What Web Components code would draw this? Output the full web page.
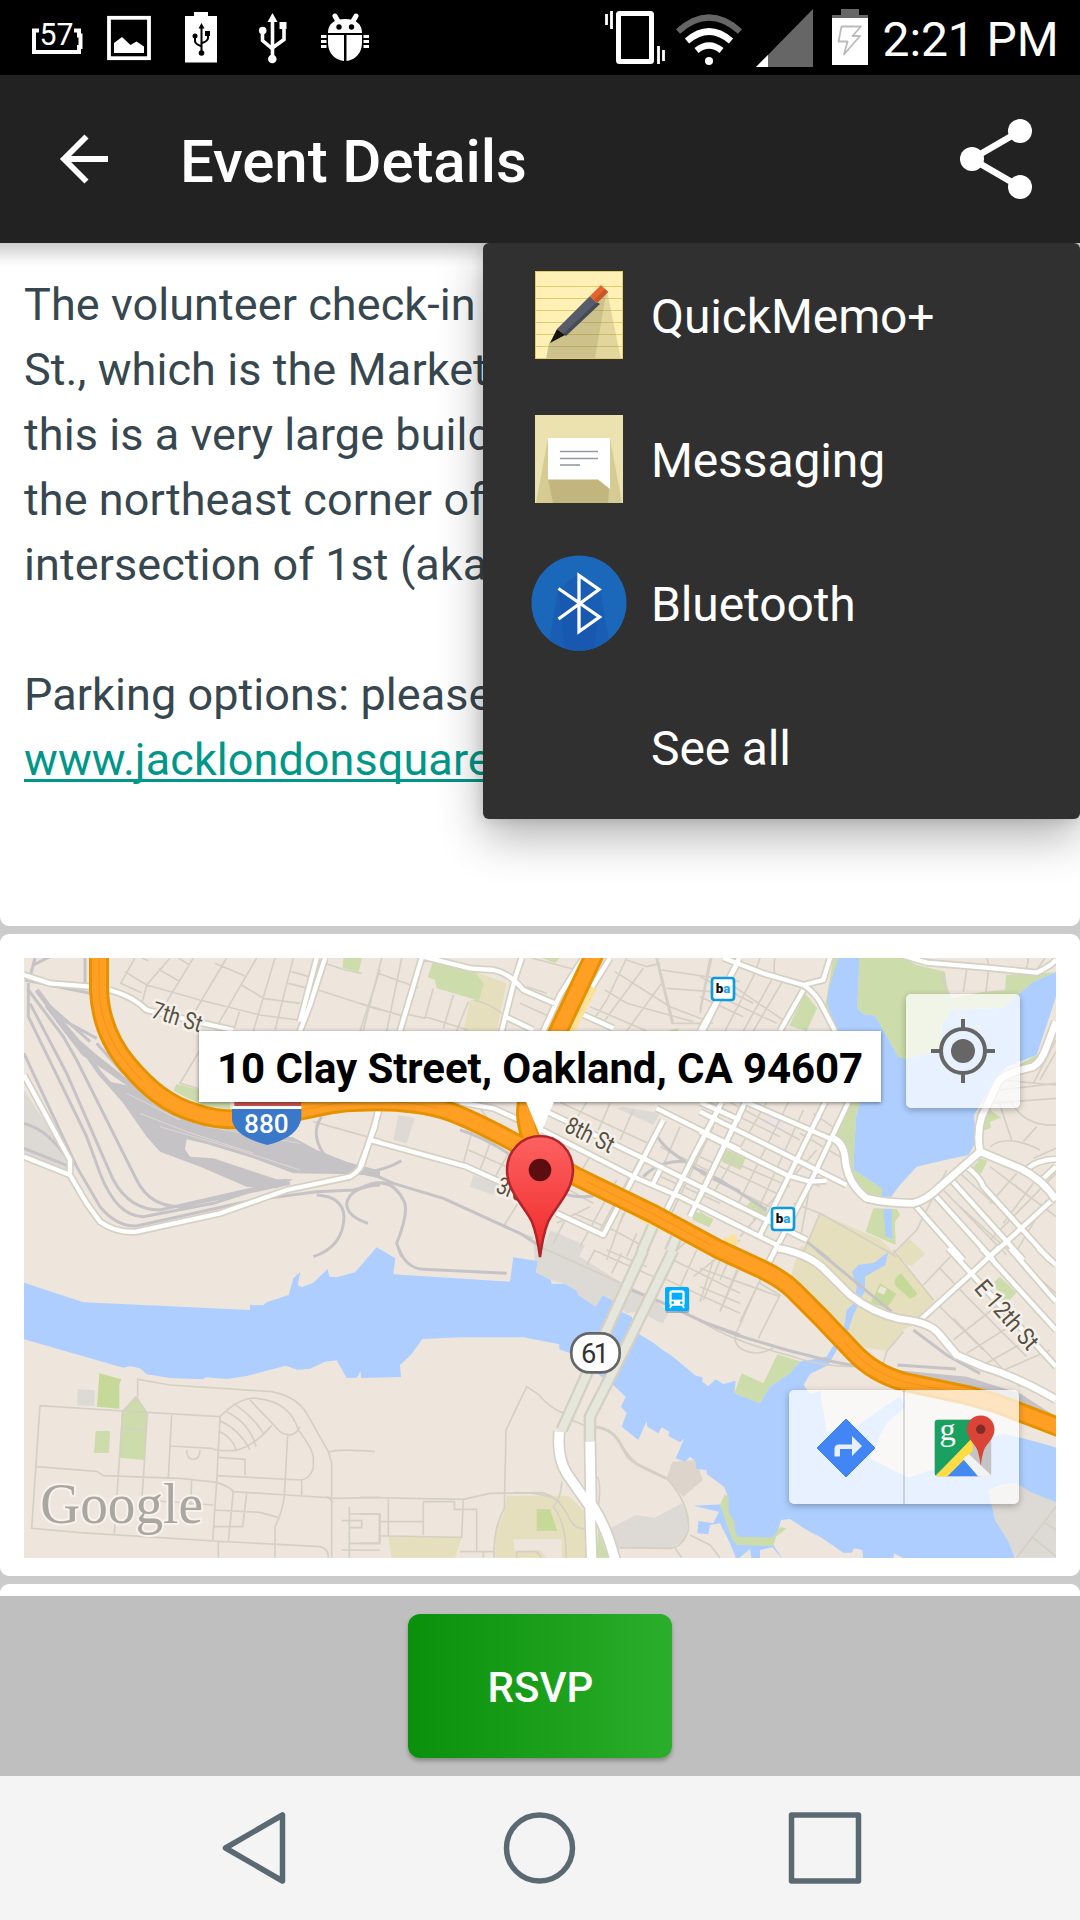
<!DOCTYPE html>
<html lang="en">
<head>
<meta charset="utf-8">
<title>Event Details</title>
<style>
html,body{margin:0;padding:0;width:1080px;height:1920px;overflow:hidden;background:#fff;font-family:Roboto,"Noto Sans",sans-serif}
</style>
</head>
<body>
<phone-screen>
  <status-bar slot="status">2:21 PM</status-bar>
  <app-bar slot="bar">Event Details</app-bar>
  <share-menu slot="menu">
    <menu-row icon="memo">QuickMemo+</menu-row>
    <menu-row icon="message">Messaging</menu-row>
    <menu-row icon="bluetooth">Bluetooth</menu-row>
    <menu-row>See all</menu-row>
  </share-menu>
  <info-card class="desc" kind="text"><event-text></event-text></info-card>
  <info-card kind="map"><map-view address="10 Clay Street, Oakland, CA 94607"></map-view></info-card>
  <info-card kind="rest"></info-card>
  <rsvp-bar slot="action">RSVP</rsvp-bar>
  <nav-bar slot="nav"></nav-bar>
</phone-screen>
<script>
const define = (name, html) => customElements.define(name, class extends HTMLElement {
  constructor(){
    super();
    this.attachShadow({mode:'open'});
  }
  connectedCallback(){
    this.shadowRoot.innerHTML = typeof html === 'function' ? html(this) : html;
  }
});

define('phone-screen', `
<style>
:host{display:flex;flex-direction:column;width:1080px;height:1920px;position:relative;overflow:hidden}
main{flex:1;display:flex;flex-direction:column;gap:8px;background:#ccc;overflow:hidden;position:relative;min-height:0}
.shade{position:absolute;left:0;right:0;top:0;height:24px;background:linear-gradient(rgba(0,0,0,.2),rgba(0,0,0,.1) 42%,rgba(0,0,0,.03) 75%,transparent)}
</style>
<slot name="status"></slot><slot name="bar"></slot>
<main><slot></slot><div class="shade"></div></main>
<slot name="action"></slot><slot name="nav"></slot><slot name="menu"></slot>`);

define('status-bar', `
<style>
:host{display:flex;height:75px;background:#000;color:#fff;font-size:48px;line-height:75px;flex:none}
svg{display:block;flex:none;height:75px}
.sp{flex:1}
.time{width:206px;box-sizing:border-box;padding-left:8.500px;margin-top:2px;height:73px;white-space:nowrap;letter-spacing:-.1px}
</style>
<svg width="90" viewBox="0 0 90 75"><path d="M39 30.500h-5v21.500h45V47h1.500V35.500H79v-5h-5" fill="none" stroke="#fff" stroke-width="4"/><text x="39.500" y="45" font-size="31" textLength="34" lengthAdjust="spacingAndGlyphs" fill="#fff">57</text></svg>
<svg width="75" viewBox="90 0 75 75"><rect x="109" y="17.800" width="40" height="40.400" fill="none" stroke="#fff" stroke-width="3.800"/><path d="M114 53V43l8-6 8.500 8 6-3.500 7.500 5V53z" fill="#fff"/></svg>
<svg width="70" viewBox="165 0 70 75"><path d="M185 16h9v-4h14v4h9v46.500h-32z" fill="#fff"/><g fill="none" stroke="#000" stroke-width="2"><path d="M201.500 26v26M195 37v4q0 3 6 5M208 34v4q0 3-6 5"/></g><g><circle cx="201.500" cy="53" r="2.800"/><circle cx="195" cy="36" r="2.500"/><path d="M198.500 28.500l3-5.500 3 5.500zM205 31h5v5h-5z"/></g></svg>
<svg width="70" viewBox="235 0 70 75"><g fill="none" stroke="#fff" stroke-width="3.600"><path d="M272.500 20v40M262.500 31v9.500l10 8.500v4M284 26v13.500l-11 8"/></g><g fill="#fff"><circle cx="272.300" cy="59" r="4.300"/><circle cx="262.700" cy="30.500" r="3.800"/><path d="M267.500 22l5-9 5 9zM279.500 22h7v7h-7z"/></g></svg>
<svg width="90" viewBox="305 0 90 75"><g fill="#fff"><path d="M328 33c0-9 6-14 17-14s17 5 17 14zM328 35h16v26c-10-1-16-9-16-18zM346.500 35H362v8c0 9-6 17-15.500 18zM321 35h5.500v3H321zm0 5h5.500v3H321zm0 5h5.500v3H321zm42.500-10h5.500v3h-5.500zm0 5h5.500v3h-5.500zm0 5h5.500v3h-5.500z"/></g><path d="M335 16l4 7M356 16l-4 7" stroke="#fff" stroke-width="5" stroke-linecap="round"/><circle cx="339" cy="27" r="2.700"/><circle cx="351.500" cy="27" r="2.700"/></svg>
<div class="sp"></div>
<svg width="70" viewBox="600 0 70 75"><rect x="618.500" y="13.500" width="33" height="48" rx="1" fill="none" stroke="#fff" stroke-width="5"/><path d="M606.500 14v11M611.500 11v18M658.500 46v18M663.500 50v11" stroke="#fff" stroke-width="2.800"/></svg>
<svg width="80" viewBox="670 0 80 75"><g fill="none" stroke-width="6"><path d="M678 31.500q31-28 62 0" stroke="#666"/><path d="M687 41q22-19 44 0M696.500 50.500q12.500-10 25 0" stroke="#fff" stroke-width="6.500"/></g><circle cx="709" cy="61" r="4" fill="#fff"/></svg>
<svg width="75" viewBox="750 0 75 75"><path d="M813 9v58h-57z" fill="#666"/><path d="M768 55v12h-12z" fill="#fff"/></svg>
<svg width="49" viewBox="825 0 49 75"><path d="M841 9h18v6h9v3h-36v-3h9z" fill="#666"/><path d="M832 18h36v47h-36z" fill="#fff"/><path d="M841.500 26.500H861l-8.500 9.500h7.500l-16 18.500 3.500-13h-9z" fill="none" stroke="#bbb" stroke-width="1.800" stroke-linejoin="round"/></svg>
<span class="time"><slot></slot></span>`);

define('app-bar', `
<style>
:host{display:flex;align-items:center;height:168px;flex:none;background:#222;color:#fff;position:relative}
svg{display:block;flex:none}
h1{margin:5px 0 0 0;flex:1;font:500 60px/70px Roboto;white-space:nowrap;letter-spacing:-.1px}
</style>
<svg width="180" height="168" viewBox="0 75 180 168"><path d="M108 159H64M86.500 136.500L64 159l22.500 22.500" fill="none" stroke="#fff" stroke-width="5.800"/></svg>
<h1><slot></slot></h1>
<svg width="150" height="168" viewBox="930 75 150 168"><path d="M1020 131l-48 28 48 28" fill="none" stroke="#fff" stroke-width="6.500"/><g fill="#fff"><circle cx="1020" cy="131" r="12"/><circle cx="972" cy="159" r="12"/><circle cx="1020" cy="187" r="12"/></g></svg>`);

define('share-menu', `
<style>
:host{display:flex;flex-direction:column;position:absolute;left:483px;top:243px;width:597px;background:#303030;border-radius:6px;box-shadow:0 18px 46px rgba(0,0,0,.3),0 0 14px rgba(0,0,0,.14);clip-path:inset(0 0 -100px -100px)}
</style><slot></slot>`);

const rowIcons = {
  memo:`<svg width="96" height="96" viewBox="0 0 96 96"><rect x="4" y="4" width="88" height="88" fill="#fff1b5"/><path d="M4 19.500h88M4 31.500h88M4 43.500h88M4 55.500h88M4 67.500h88M4 79.500h88" stroke="#dfcc71"/><path d="M18 76L76 23 64 92H15z" fill="#837d50" opacity=".4"/><path d="M76 24L90 92H64z" fill="#968e60" opacity=".28"/><rect x="4.500" y="4.500" width="87" height="87" fill="none" stroke="#e0cd63"/><path d="M59 29l7 7-32 32-8-6z" fill="#565c6a"/><path d="M66 35l3 2-34 32-3-2z" fill="#464a55"/><path d="M59 29l11-11 7 7-11 11z" fill="#e3642f"/><path d="M74 22l3 3-11 11-3-3z" fill="#c95427"/><path d="M26 62l8 6-15 8z" fill="#17130c"/></svg>`,
  message:`<svg width="96" height="96" viewBox="0 0 96 96"><rect x="4" y="4" width="88" height="88" fill="#ece2af"/><path d="M17 27L5 92h86L79 27z" fill="#d7cb94"/><path d="M17 68l5 24h55l2-24z" fill="#c3b57e"/><path d="M17 27h62v51l-12-9.500H17z" fill="#fff"/><path d="M29 40.500h38M29 47.500h38" stroke="#969ca1" stroke-width="1.300"/><path d="M29 54h20" stroke="#aaafb3" stroke-width="2"/></svg>`,
  bluetooth:`<svg width="96" height="96" viewBox="0 0 96 96"><clipPath id="c"><circle cx="48" cy="48" r="47.500"/></clipPath><g clip-path="url(#c)"><path d="M0 0h96v96H0z" fill="#1b67ba"/><path d="M48 19L27 34 17 96h63L69 34z" fill="#195eb4"/><path d="M28 34L34 96h28l6-35z" fill="#1858b0"/></g><path d="M27.500 33.500l41 28.500L48 76.500V20.500L68 34.500 27.500 64" fill="none" stroke="#fff" stroke-width="3.300"/></svg>`
};
define('menu-row', el => `
<style>
:host{display:flex;align-items:center;height:144px;box-sizing:border-box;padding-left:48px;color:#fff;font-size:48px;line-height:60px;letter-spacing:-.12px}
.i{width:96px;height:96px;margin-right:24px}
svg{display:block}
span{padding-top:4px}
</style><div class="i">${rowIcons[el.getAttribute('icon')]||''}</div><span><slot></slot></span>`);

define('info-card', `
<style>
:host{display:block;box-sizing:border-box;background:#fff;border-radius:0 0 9px 9px;flex:none;width:1080px;box-shadow:0 5px 0 #cbcbcb}
:host([kind=text]){height:683px;padding:29px 24px 0}
:host([kind=map]){height:642px;padding:24px 24px 18px;border-radius:9px}
:host([kind=rest]){height:40px;border-radius:9px 9px 0 0}
</style><slot></slot>`);

define('event-text', `
<style>
:host{display:block;font-size:45px;line-height:65px;color:#37474f;white-space:nowrap;letter-spacing:.07px}
p{margin:0 0 65px}p+p{margin:0}
a{color:#009688;text-decoration:underline;text-decoration-thickness:2.500px;text-underline-offset:4px;text-decoration-skip-ink:none}
</style>
<p>The volunteer check-in<br>St., which is the Market<br>this is a very large build<br>the northeast corner of<br>intersection of 1st (aka</p>
<p>Parking options: please<br><a>www.jacklondonsquare</a></p>`);

/* The map canvas uses 3 units per pixel; shapes are grouped in six tiles. */
const origin = {a:[0,0],b:[1080,0],c:[2100,0],d:[0,930],e:[1080,930],f:[2100,930]};
const layer = (attrs, tiles) => Object.entries(tiles).map(([k,d]) =>
  `<path transform="translate(${origin[k]})" d="${d}" ${attrs}/>`).join('');
const road = (tiles, w, casing, fill='#fff', edge='#d5d0c4') =>
  layer(`fill="none" stroke="${edge}" stroke-width="${w+casing}" stroke-linejoin="round"`, tiles) +
  layer(`fill="none" stroke="${fill}" stroke-width="${w}" stroke-linejoin="round"`, tiles);

const green = layer('fill="#cddcab"', {
  a:'M1030 54h56l-10 42-48-12zM530 432l80 20 80 30v25l-80-10-90-45z',
  b:'M220 62L345 95 372 130 358 182 230 145 225 120 203 112zM545 54h55l-15 15zM1095 630l50 20v35l-60-25zM1010 815l50 22-12 25-50-22zM930 270l25-5v20h-25z',
  c:'M478 54H610L650 75 735 95 740 135 755 175 850 155 915 150 918 105 1068 97 1000 125 960 160 910 203 755 210 725 260 725 330 615 358 595 350 525 227 490 223 472 205zM400 54h20L387 150 384 190 412 275 375 200zM315 160l36 45-31 68-52-16zM480 487L468 530 460 688 545 745 577 768 490 775 440 700 440 640 405 590 450 490zM520 805l70 2 10 18-15 20 2 70-90-40zM80 630l57 25-15 35-57-25zM160 775l40 30v25l-62-30zM840 655l23 7-20 40-25-17zM870 510l33 23-33 12 3 18-25 10-15-50zM945 380l65-35 20 5-20 25-60 20zM0 815l40 25-15 20-25-15z',
  d:'M408 440l32 48-7 142-75-7 7-140zM287 543h43l-3 66h-45z',
  e:'M715 840l30 83h-35z',
  f:'M125 370L190 400 232 313 305 335 270 370 210 410 180 460 103 430zM900 80l50 48-35 35-35-65z'
});
const park2 = layer('fill="#c5da98"', {d:'M298 370l66 18-6 16v72l-67-6z', e:'M530 778h40l22 64h-62z', f:'M603 70l50 62-22 15-45-40q-10-20 17-37zM540 100l50 32-30 42-48-15z'});
const sand = layer('fill="#e6dfbe"', {
  b:'M345 95L440 130 410 273H310L330 180 358 182 372 130z',
  c:'M360 820L545 900 590 950 600 1000 300 950zM625 897l50 45-40 36-40-28z',
  e:'M440 737H625L690 800V923H405L407 840 430 790zM85 858l220 4-20 61H95z',
  f:'M300-10L540-30 590 15 705 150 655 215 610 240 560 303 450 285 270 85zM590 5l35-40 50 45-50 38z'
});
const grey = layer('fill="#dddad5"', {
  a:'M72 450L210 660V705L72 650z',
  b:'M115 525l50 10-25 75-40-10zM790 500l110 20-20 35-110-50zM340 705l80 30-20 30-70-25zM570 870l105 45-20 40-100-40z',
  d:'M233 417l52 4-2 48-52-3z',
  e:'M520-30L660 20 780 95 890 150 925 190 908 222 838 185 800 190 755 150 728 136 707 170 655 136 650 122 615 101 572 90 527 67z',
  f:'M865 720L950 700 1068 757V923H948L885 810z'
}) + layer('fill="#ebe3e6"',{c:'M203 522l57 22-14 32-58-24z'}) + layer('fill="#dddad5"',{e:'M720 850L828 795 885 803 965 760 988 800 975 870 930 893 770 897z'}) + layer('fill="#ddd5cc"',{e:'M937 635l71-5 20 60-58 50-50-57z'});

const water = layer('fill="#adceff"', {
  d:`M72 98L250 157 750 180 750 165 790 166 800 157 866 135 880 85 901 66 893 105 905 112 940 98 983 57 988 80 1010 82 1065 67 1130-8 1186 25 1180 73 1530 95 1540 22 1613 33 1607 67 1652 90 1655 101 1695 101 1730 122 1735 136 1787 170 1808 136 1835 150 1865 185 1895 200 1918 253 1960 278 1985 298 2015 317 2088 378 2107 381 2107 395 2125 409 2147 388 2170 402 2207 392 2203 430 2280 460 2310 410 2370 370 2400 335 2480 320 2510 270 2532 235 2540 180 2562 160 2570 110 2556 65 2575 45 2623 38 2640 25 2665 5 2656 45 2595 80 2595 120 2575 165 2560 195 2545 240 2510 300 2485 345 2430 372 2411 405 2430 432 2462 422 2465 465 2478 500 2480 545 2560 535 2600 500 2700 440 2715 470 2660 520 2610 625 2725 683 2800 650 2970 560 3030 548 3100 570 3168 593 3168 757 3090 725 3050 700 3000 705 2965 720 2985 810 3025 875 3048 930 2720 930 2682 910 2680 930 2590 930 2587 900 2562 895 2555 908 2530 908 2465 863 2420 840 2370 807 2343 810 2320 885 2350 930 2317 892 2280 900 2280 930 2255 930 2250 897 2210 930 2190 880 2160 820 2130 825 2125 853 2092 850 2095 813 2140 820 2157 785 2080 767 2170 763 2182 735 2172 710 2120 672 2120 660 2088 657 2088 635 2070 620 2055 635 2027 625 2053 565 2040 577 2005 558 2008 545 1985 532 1975 550 1942 530 1940 513 1915 570 1865 530 1880 490 1863 470 1877 440 1845 410 1710 310 1678 298 1678 283 1570 262 1380 262 1267 267 1235 312 1200 345 1203 381 1083 384 1082 363 1070 383 1040 384 1010 331 975 335 930 356 892 359 857 347 740 378 680 387 618 382 610 388 510 384 440 373 420 355 390 349 370 353 72 268z`,
  c:'M415 54H478L472 205 490 223 525 227 595 350 615 358 725 330 725 260 755 210 910 203 960 160 1000 125 1068 97V170L1010 345 920 380 885 420 822 525 828 605 805 645 735 660 650 680 600 735 577 765 545 745 460 688 468 530 480 487 475 400 410 273 382 190 385 150zM550 807h25l2 90-20-9zM546 742h30v28h-30z'
});
const shoreGreen = layer('fill="#cddcab"', {f:'M75 732L60 765 95 865 110 885 220 888 228 860 260 835 240 832 218 862 115 860 105 845 103 815 85 785 86 742z',c:'M768 230l12-14 5 12zM820 262l12-8 14 4-8 12z'});

const rail = layer('fill="#c6c3c7"', {
  a:'M330 425L400 440 460 490 510 520 580 545 700 570 880 592 950 630 1040 665 1140 692V708L1050 703 880 700 760 655 620 612 560 598 555 628 570 650 640 655 830 718H880L830 745 740 740 600 680 480 635 440 590 380 505z',
  f:'M590 360L800 380 960 430 1068 500V512L900 440 740 405 600 380z'
}) + layer('fill="none" stroke="#c6c3c7" stroke-width="14"', {
  a:'M110 150L170 230 230 300 300 400 380 490M140 195L200 275 280 345 400 440M170 235L250 340 340 400 440 470'
}) + layer('fill="none" stroke="#c6c3c7" stroke-width="9"', {
  a:'M105 54L85 130V230L260 590 300 700Q350 830 430 830L640 790 860 720M85 150L190 290 230 360 410 720Q450 800 540 800L870 730M90 190L200 400 340 720Q390 810 480 810L830 730M72 340L230 680 300 800Q350 860 410 858L760 780 950 755 1060 750 1140 730M72 550Q150 570 210 670M72 625L210 680M100 75l50-25M255 54V140M75 120L270 160M145 195L220 260 270 305M180 235L290 295M290 310L370 400M940 950Q1030 920 1032 830 1030 770 950 765M1104 850Q1040 830 1040 790 1050 740 1140 735M965 530Q930 580 970 640 1020 690 1140 710',
  b:'M0 700Q80 690 124 662M0 745Q90 700 130 780 150 810 110 910L125 950M0 685L100 730 250 775 480 880 550 925M610 760Q650 775 700 768M300 570Q370 590 460 650M890 585Q920 650 1140 755M970 665Q900 660 850 710',
  c:'M0 690L60 720 200 810M320 905L390 960',
  e:'M118 0Q140 55 190 58L440 70M815 120L900 155 1040 220 1140 255',
  f:'M0 212L110 255 260 300 400 335 560 365 700 395M350 0L575 185M640 240L740 315 840 370M592 345L768 357'
}) + layer('fill="none" stroke="#e2dbd5" stroke-width="2.500"', {
  a:'M420 520L560 575 760 640M480 560L700 625 900 690M620 560L900 610M380 460L540 540'
});

const minor = layer('fill="none" stroke="#d5d0c4" stroke-width="5"', {
  a:'M405 54L362 130 425 158M375 95L440 135 600 180 780 225 895 240M425 54l20 8M510 54L440 135 427 185M475 87L540 125M535 54l35 22M580 54L485 210M680 54L605 180 570 240M645 70l90 38M770 54L650 260M725 135l65 40 110 15M825 54L760 273M880 54L825 270M875 95l70 20M865 130l60 15M718 215l-15 50M600 330L540 430 610 450M955 150L1140 210M975 70l60 20 50 10M1140 90L1080 273M940 545L1100 590',
  b:'M65 54L0 310M125 54L80 273M50 98l125 45M0 190L135 230M220 145L195 235 130 220M280 165l-30 100M325 185L290 273M195 230l130 40M340 180q50 10 85 40M515 54L650 90M500 140l60 20M480 190l90 40M800 54L740 180 700 240M765 95L930 200 1060 250M735 150L800 190 1000 245M690 200L860 273M850 85L735 240M905 130L800 273M1050 54L1020 210M905 90L1140 125M920 145l210 15M800 60l60 20 40-10M935 250h95M600 487l280 130M680 487L640 550M750 490L715 570M820 510L780 600M870 600L720 870M350 490l50 70 60 30M340 560L310 670M390 610L360 690M445 640L400 720M325 630L440 680M630 620L590 700M690 650L640 730M700 790L610 740M770 720L660 920M690 800L590 850M820 760L780 850M640 820l120 50M480 780L430 860 520 895M620 830L580 910M900 620L1060 700M880 700L1080 790M960 560L900 700M1060 560L920 850M1020 870L950 930M1140 900L1000 1010M790 820L740 960M830 880L800 950M740 930L860 980M760 870L870 930',
  c:'M0 170L130 230M0 110L160 190M35 54L0 220M180 54L160 110M225 54q-5 20 0 55M160 110L75 273M215 120L130 273M80 125L250 240M250 120L160 273M60 170L230 250M30 487L240 590M90 487L300 600M200 487L40 760M265 487L110 800M310 510L160 840M0 650L250 770M60 650L270 740M300 580L420 650M340 520L440 590M30 590L360 740M350 630L120 890M0 700L230 810M730 95q0 70 35 110M800 90L790 155M865 95L858 155M860 54l8 25M985 54l-5 35M1035 54L1010 90M1068 300L1000 430M1068 335L1020 420M905 420L1068 435M900 450L1068 430M870 490L1068 475M895 480l40 120M930 480Q970 560 1068 555M1010 560L970 605M870 620q50-40 150 10M1000 655L1068 625M950 700L870 790M1000 730L910 850M1068 830L870 680M780 700L960 860M720 740L920 945M650 800L790 950M1040 780L940 950M360 820L590 950M360 820L300 960M330 740L300 900M280 790L360 820M740 690L650 870 580 940M870 900L1068 700M780 800L1068 1060',
  d:'M413 440V388L510 405 815 425Q890 440 920 490L985 605 995 640V923M120 467L370 483 660 500M120 467L95 835 240 848 470 862 640 873 960 890Q985 895 985 923M108 650L290 664 310 677 540 685 650 697Q690 710 700 725L860 735 1020 745 1140 742M408 440L368 485 343 850M408 440L442 490 430 685 420 820M365 533L438 540M515 492L505 685M510 588L635 595 655 602H705Q760 590 815 527M560 600q0 28 20 28 20 0 20-28M660 500L650 697 638 873M660 500Q720 440 770 445 870 455 895 540 940 600 940 625V655Q930 685 905 690L650 677M750 450L840 545Q880 570 900 530M700 460Q760 500 790 550M680 485Q750 520 768 590M660 512Q720 540 750 600M660 545q40 20 48 55M655 622L735 628V675M863 555L853 735Q850 780 825 830V923M700 725L685 873M640 780L780 787 835 803M740 730L728 830H640M575 690L572 765M430 750L640 765M905 690V735M985 607Q1010 595 1125 605M980 740L1000 755M655 875V923M1048 770V923M1048 792H1138V880H1045M1025 812H1085V833H1048M1025 900H1140',
  e:'M610 490Q570 475 535 433L500 410 438 540 433 775Q400 830 402 923M635 510L670 525 730 535Q770 550 800 620 830 650 920 685 990 760 985 840 970 890 930 895L780 893M0 742L310 748 390 730 545 728Q600 740 630 810 650 840 675 835M460 728Q550 725 600 755M605 695Q605 740 580 770 620 820 618 923M710 680q15 10 5 90M85 745V858L305 862 310 748M190 755V855M190 755H283V778H350V905H300M60 815H190M55 858H85M0 792H60V880H0M370 905V923M300 905H400M470 923V905H530L545 923M990 855L1050 885 1080 923M945 895L965 923M540-10L780 98M680 45L705 0M755 70L785 10M700 0L880 80M960 110L1010 0M1030 150L1085 20M1080 185L1135 60M900 80L1140 190M940 30L1140 130',
  f:'M0 210Q80 270 280 320 360 350 470 350M0 155L40 30M60 185L110 60M120 215L180 90M0 55L240 140M0 110L120 160M100 0L60 90M180 70V100L240 135 175 265M180 90L115 235Q90 280 130 300T220 295M610 245L560 305 550 340M580 0L700 150M720 55L800 140M770 0L670 105M800 140L860 200 980 320M760 205L960 410M710 160L850 300M830 70L680 200M920 145L760 270M960 210L800 310M1010 255L850 345M1050 300L890 370M860 130L1040 320M1068 770L950 923M995 860L1068 920M1030 815L1068 840'
}) + layer('fill="none" stroke="#d5d0c4" stroke-width="9"', {b:'M890 54L938 250',e:'M705 530Q750 535 775 570 800 620 830 642L918 685'});
const majors = {
  a:'M72 105L150 130 270 140M330 150Q400 170 440 210L610 250 700 270M975 54L930 195 900 273M950 54L900 245M72 405L210 660V700M72 650L210 705 260 790 300 845Q350 880 410 875L660 820 860 750 1050 710Q1085 690 1090 660L1140 503M1110 600l30 6',
  b:'M185 54L120 273M190 50L330 85 400 90Q450 100 490 150L590 193M485 54L465 115 425 273M670 54L600 165 550 273M750 54L650 215 760 265M440 232L520 270M300 487L400 505 500 550M560 515L860 660 1140 800M545 570L820 710 960 770 1140 860M890 505L1140 630M1020 487L1140 540M910 540L730 885 590 820M1085 487L1000 650 920 810M1150 500L990 830M55 503L45 560 0 680M30 600L320 680 430 730M1130 75L1020 273M900 690L880 730',
  c:'M118 54L0 290M70 54L190 100 310 135Q350 160 370 205L405 273M390 54L370 120 310 135M310 150L240 273M140 487L400 600M0 515L290 660 440 735M0 575L260 705 330 725 380 722M0 740L200 840 320 900M0 800L240 920 330 960M65 487L0 615M135 487L0 770M375 487L180 885M445 487L330 730 210 960M640 790L790 960M700 760L880 960M745 710L970 960M800 680Q840 710 850 740L1050 960M870 950L1068 770M1020 725L1068 680M980 688Q1010 660 1068 657M620 50L680 68 850 82 1010 98Q1050 80 1068 60',
  f:'M655 215L820 65 900-10M745-5L1068 350M845-5L1068 240M930-5L1068 155M1015-5L1068 45M235-20L205 40'
};
const bigs = {
  c:'M400 595Q430 610 435 650 440 730 500 775 560 790 640 790 680 780 720 740L840 635Q830 580 845 530L895 425Q910 400 1000 380 1025 365 1040 320L1068 245M840 635L960 685Q1030 720 1068 780',
  f:'M235-5Q320 10 370 55L450 135Q520 190 600 207 690 215 720 255L770 315 850 350Q950 380 1068 448'
};
const bridge = {b:'M880 855L845 935M950 890L930 935',e:'M850 0L735 250 605 540M940 0L800 285 690 500V575'};
const ramp = {e:'M598 545Q590 620 620 670L690 770 695 930M690 575L693 760Q740 830 765 930'};
const hwy = 'M297 40V150C300 230 330 310 385 375C440 440 500 495 590 520C660 545 740 540 800 532C900 518 980 485 1080 485C1200 480 1290 495 1350 515C1430 545 1490 580 1550 610L1730 710 1960 822 2150 925 2290 990Q2350 1020 2380 1050L2460 1130 2560 1235Q2620 1300 2710 1325L2900 1365 2990 1390 3180 1463';

const pt = (x,y) => `<g transform="translate(${x} ${y})"><rect x="-33" y="-33" width="66" height="66" rx="8" fill="#fff" stroke="#0c9cdd" stroke-width="8"/><text y="13" x="-22" font-size="37" font-weight="900" textLength="44" lengthAdjust="spacingAndGlyphs" fill="#111">b<tspan fill="#2aa7df">a</tspan></text></g>`;
const label = (x,y,r,len,t) => `<text transform="translate(${x} ${y}) rotate(${r})" font-size="72" textLength="${len}" lengthAdjust="spacingAndGlyphs" fill="#555042" stroke="#f5f0ea" stroke-width="16" stroke-linejoin="round" paint-order="stroke">${t}</text>`;

define('map-view', el => `
<style>
:host{display:block;position:relative;width:1032px;height:600px;overflow:hidden}
svg{display:block;font-family:Roboto}
.tip{position:absolute;left:175px;top:73px;width:682px;height:71px;box-sizing:border-box;padding-left:18px;background:#fff;color:#000;font:700 42px/75px Roboto;letter-spacing:-.07px;white-space:nowrap;box-shadow:0 1px 4px rgba(0,0,0,.5)}
.btns{position:absolute;display:flex;background:rgba(255,255,255,.72);border-radius:5px;box-shadow:0 2px 7px rgba(0,0,0,.28);height:114px}
.loc{left:882px;top:36px;width:114px}
.go{left:765px;top:432px;width:230px}
.go svg+svg{border-left:2px solid rgba(0,0,0,.13);box-sizing:border-box}
.pin{position:absolute;left:481px;top:140px}
</style>
<svg width="1032" height="600" viewBox="72 54 3096 1800">
<path d="M72 54h3096v1800H72z" fill="#eee6dd"/>
${green}${sand}${park2}${grey}${water}${shoreGreen}
<path d="M2610 1475L2565 1360 2700 1330 2900 1370 3168 1480V1520L3000 1478 2820 1580 2725 1613z" fill="#eee6dd"/>
<path d="M2480 1475L2560 1465 2600 1430 2700 1370 2715 1400 2660 1450 2600 1560 2520 1560z" fill="#adceff"/>
<path d="M2462 1352L2480 1475 2575 1455 2695 1370 2640 1330 2500 1300z" fill="#eee6dd"/>
${layer('fill="#eee6dd"',{e:'M460 868H605V923H560L540 900 465 905z',f:'M542 108l18 8-8 18-20-8z'})}
${minor}${rail}
${road(bridge,24,14,'#e5e6dc')}
${road(majors,13,10)}${road(bigs,20,10)}${road(ramp,28,10)}
<path d="M282 150Q300 260 370 350M2150 925l60-30M1920 825l150 70" fill="none" stroke="#fde09a" stroke-width="30"/>
<path d="M1755 130L1675 290" fill="none" stroke="#fde09a" stroke-width="78"/>
<g fill="none" stroke-linejoin="round"><path d="M1785 40L1675 273 1590 460Q1560 530 1605 620M${hwy.slice(1)}" stroke="#e69200" stroke-width="60"/><path d="M1785 40L1675 273 1590 460Q1560 530 1605 620M${hwy.slice(1)}" stroke="#ff9f23" stroke-width="42"/><path d="${hwy}" stroke="#ee930f" stroke-width="2.500" stroke-dasharray="420 500"/></g>
${label(451,232,17,154,'7th St')}${label(1690,573,26,154,'8th St')}${label(1484,755,22,154,'3rd St')}${label(2920,1046,49,250,'E 12th St')}
<path d="M703 470H903V500H703z" fill="#d5524f"/><path d="M696 507H904V530Q900 590 802 615 704 590 696 540z" fill="#3a78c9"/><path d="M700 498H904V507H696z" fill="#fff"/><text x="732" y="580" font-size="76" font-weight="500" textLength="134" lengthAdjust="spacingAndGlyphs" fill="#fff">880</text>
<rect x="1714" y="1180" width="145" height="117" rx="55" fill="#fff" stroke="#666" stroke-width="8"/><text x="1743" y="1268" font-size="82" textLength="84" fill="#333">61</text>
${pt(2169,147)}${pt(2349,837)}
<rect x="1996" y="1045" width="72" height="74" rx="6" fill="#8d949c" opacity=".7"/><rect x="1995" y="1041" width="72" height="72" rx="6" fill="#00adff"/><path d="M2008 1060q0-9 9-9h28q9 0 9 9v31q0 6-6 6h-34q-6 0-6-6z" fill="#fff"/><path d="M2015 1058h32v21h-32z" fill="#00adff"/><circle cx="2018" cy="1088" r="4" fill="#00adff"/><circle cx="2044" cy="1088" r="4" fill="#00adff"/><path d="M2016 1095l-7 9M2046 1095l7 9" stroke="#fff" stroke-width="5"/>
<g font-family="Liberation Serif" font-size="172"><text x="121" y="1750" textLength="488" lengthAdjust="spacingAndGlyphs" fill="#aaa6a0" stroke="#f6f2ec" stroke-width="12" paint-order="stroke">Google</text></g>
</svg>
<div class="tip">${el.getAttribute('address')}</div>
<svg class="pin" width="70" height="162" viewBox="505 1098 70 162"><defs><linearGradient id="g" x2="0" y2="1"><stop stop-color="#fd6161"/><stop offset="1" stop-color="#ef2929"/></linearGradient></defs><path d="M526 1101.500h28l-14 34z" fill="#fff"/><path d="M540 1136c18 0 33 15 33 34 0 22-19 38-25 52-4 10-6 20-8 35-2-15-4-25-8-35-6-14-25-30-25-52 0-19 15-34 33-34z" fill="url(#g)" stroke="#b1252a" stroke-width="2.500"/><circle cx="540" cy="1170" r="11.300" fill="#5c0d10"/></svg>
<div class="btns loc"><svg width="114" height="114" viewBox="0 0 114 114"><circle cx="57" cy="57" r="22" fill="none" stroke="#666" stroke-width="4"/><circle cx="57" cy="57" r="12" fill="#666"/><path d="M57 25v9M57 80v9M25 57h9M80 57h9" stroke="#666" stroke-width="4"/></svg></div>
<div class="btns go"><svg width="114" height="114" viewBox="0 0 114 114"><path d="M57 29L86 58 57 87 28 58z" fill="#4285f4" stroke="#4285f4" stroke-width="1" stroke-linejoin="round"/><path d="M45.500 66.500V59q0-4.500 4.500-4.500h13V46l10 10-10 10v-7H51v7.500z" fill="#e8f0fe"/></svg>
<svg width="116" height="114" viewBox="0 0 116 114"><clipPath id="m"><rect x="30" y="29" width="58" height="58" rx="4"/></clipPath><g clip-path="url(#m)"><path d="M30 29h58v58H30z" fill="#c4c4c4"/><path d="M30 29h58L30 87z" fill="#1ba15f"/><path d="M42 87l17-18 18 18z" fill="#4289f2"/><path d="M30 88L69 47v14L42 88z" fill="#fddc44"/><path d="M59 69l6-5 23 22v4h-11z" fill="#f2f2f2"/></g><text x="35" y="50" font-family="Liberation Serif" font-size="33" fill="#fff">g</text><path d="M77 25c8 0 14 6 14 14 0 10-8 14-11 22q-2 6-3 15-1-9-3-15c-3-8-11-12-11-22 0-8 6-14 14-14z" fill="#da4437"/><circle cx="77" cy="39" r="4.800" fill="#802b25"/></svg></div>`);

define('rsvp-bar', `
<style>
:host{display:flex;justify-content:center;align-items:center;height:180px;flex:none;background:#bfbfbf}
button{all:unset;box-sizing:border-box;width:264px;height:144px;border-radius:12px;background:linear-gradient(90deg,#0a900a,#2bae2b);color:#fff;font:500 42px/48px Roboto;text-align:center;padding:4px 0 0 1px;box-shadow:0 3px 4px rgba(0,0,0,.28)}
</style><button><slot></slot></button>`);

define('nav-bar', `
<style>
:host{display:flex;justify-content:space-between;align-items:center;height:144px;flex:none;box-sizing:border-box;padding:0 217px 0 218px;background:#f4f4f4}
svg{display:block}g{fill:none;stroke:#5b6973;stroke-width:5.500;stroke-linejoin:round}
</style>
<svg width="76" height="76" viewBox="0 0 76 76"><g><path d="M64.500 5v66L7.500 38z"/></g></svg>
<svg width="76" height="76" viewBox="0 0 76 76"><g><circle cx="36.500" cy="38" r="33"/></g></svg>
<svg width="76" height="76" viewBox="0 0 76 76"><g><path d="M4.500 5h67v66h-67z"/></g></svg>`);
</script>
</body>
</html>
